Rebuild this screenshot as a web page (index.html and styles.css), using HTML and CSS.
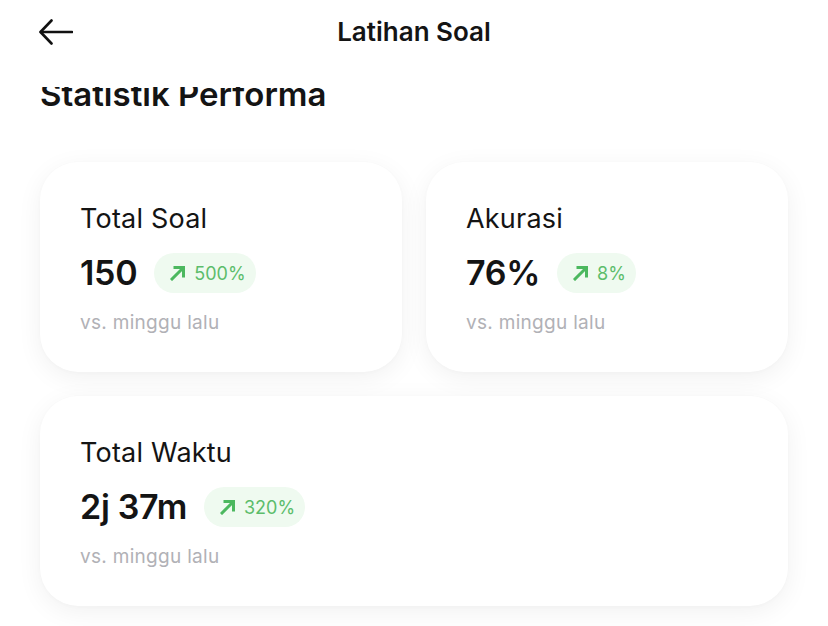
FILE: index.html
```html
<!DOCTYPE html>
<html lang="id">
<head>
<meta charset="utf-8">
<title>Latihan Soal</title>
<link rel="stylesheet" href="styles.css">
</head>
<body>
<header class="topbar">
  <button class="back" aria-label="Kembali">
    <svg width="34" height="26" viewBox="0 0 34 26" fill="none" stroke="#111" stroke-width="2.6" stroke-linecap="round" stroke-linejoin="round">
      <path d="M33 13 H2"/>
      <path d="M12.5 1.5 L1.5 13 L12.5 24.5"/>
    </svg>
  </button>
  <h1 class="title">Latihan Soal</h1>
</header>
<main class="content">
  <h2 class="section-title">Statistik Performa</h2>
  <div class="grid">
    <section class="card">
      <div class="card-label">Total Soal</div>
      <div class="value-row">
        <span class="value">150</span>
        <span class="badge">
          <svg class="up" width="16" height="16" viewBox="0 0 16 16" fill="none" stroke="#4cb85f" stroke-width="3" stroke-linecap="square" stroke-linejoin="miter"><path d="M2 14 L13 3"/><path d="M5 2.5 H13.5 V11"/></svg>
          <span>500%</span>
        </span>
      </div>
      <div class="note">vs. minggu lalu</div>
    </section>
    <section class="card">
      <div class="card-label">Akurasi</div>
      <div class="value-row">
        <span class="value">76%</span>
        <span class="badge">
          <svg class="up" width="16" height="16" viewBox="0 0 16 16" fill="none" stroke="#4cb85f" stroke-width="3" stroke-linecap="square" stroke-linejoin="miter"><path d="M2 14 L13 3"/><path d="M5 2.5 H13.5 V11"/></svg>
          <span>8%</span>
        </span>
      </div>
      <div class="note">vs. minggu lalu</div>
    </section>
    <section class="card wide">
      <div class="card-label">Total Waktu</div>
      <div class="value-row">
        <span class="value">2j 37m</span>
        <span class="badge">
          <svg class="up" width="16" height="16" viewBox="0 0 16 16" fill="none" stroke="#4cb85f" stroke-width="3" stroke-linecap="square" stroke-linejoin="miter"><path d="M2 14 L13 3"/><path d="M5 2.5 H13.5 V11"/></svg>
          <span>320%</span>
        </span>
      </div>
      <div class="note">vs. minggu lalu</div>
    </section>
  </div>
</main>
</body>
</html>
```

FILE: styles.css
```css
* { box-sizing: border-box; }

html, body {
  margin: 0;
  padding: 0;
  background: #ffffff;
  font-family: Inter, "Noto Sans", "Liberation Sans", sans-serif;
  color: #141414;
  height: 626px;
  overflow: hidden;
}

.topbar {
  position: relative;
  z-index: 2;
  height: 87px;
  background: #ffffff;
  display: flex;
  align-items: flex-start;
  justify-content: center;
  padding-top: 7px;
}

.back {
  position: absolute;
  left: 39px;
  top: 19px;
  padding: 0;
  margin: 0;
  border: 0;
  background: none;
  display: flex;
}

.title {
  margin: 0;
  font-size: 26px;
  line-height: 50px;
  font-weight: 600;
  letter-spacing: 0;
  color: #141414;
}

.content {
  margin-top: -11px;
  padding: 0 40px;
}

.section-title {
  margin: 0;
  font-size: 33px;
  line-height: 36px;
  font-weight: 600;
  letter-spacing: 0;
  color: #141414;
}

.grid {
  margin-top: 50px;
  display: grid;
  grid-template-columns: 1fr 1fr;
  gap: 24px;
}

.card {
  background: #ffffff;
  border-radius: 38px;
  box-shadow: 0 6px 26px rgba(0, 0, 0, 0.06), 0 1px 4px rgba(0, 0, 0, 0.02);
  padding: 41px 40px 37px;
  display: flex;
  flex-direction: column;
  gap: 18px;
  height: 210px;
}

.card.wide {
  grid-column: 1 / 3;
}

.card-label {
  font-size: 27px;
  line-height: 32px;
  font-weight: 400;
  letter-spacing: 0.2px;
  color: #141414;
}

.value-row {
  display: flex;
  align-items: center;
  gap: 17px;
  height: 40px;
}

.value {
  font-size: 34px;
  line-height: 40px;
  font-weight: 600;
  color: #141414;
  letter-spacing: -0.3px;
}

.badge {
  display: inline-flex;
  align-items: center;
  gap: 8px;
  height: 40px;
  padding: 0 10px 0 16px;
  border-radius: 20px;
  background: #effaf0;
  color: #5cbd6b;
  font-size: 18px;
  font-weight: 400;
}

.note {
  font-size: 19px;
  line-height: 24px;
  letter-spacing: 0.3px;
  color: #b1b1b6;
}
```
